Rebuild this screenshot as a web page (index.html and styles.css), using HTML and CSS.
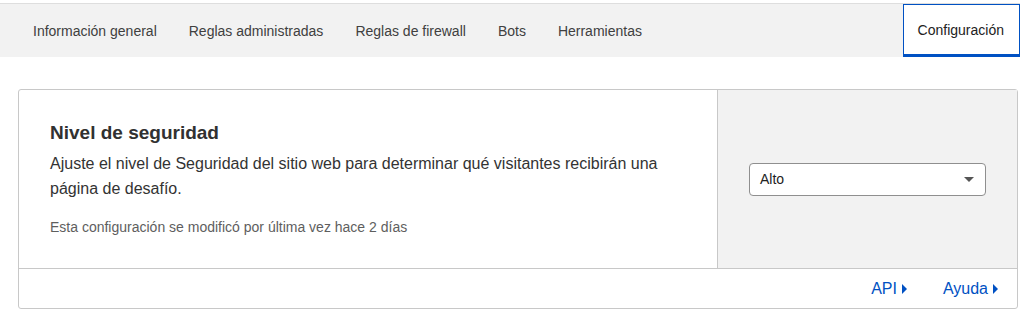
FILE: index.html
```html
<!DOCTYPE html>
<html lang="es">
<head>
    <meta charset="UTF-8">
    <meta name="viewport" content="width=device-width, initial-scale=1.0">
    <title>Configuración</title>
    <link rel="stylesheet" href="styles.css">
</head>
<body>
    <nav class="tabs">
        <a class="tab" href="#">Información general</a>
        <a class="tab" href="#">Reglas administradas</a>
        <a class="tab" href="#">Reglas de firewall</a>
        <a class="tab" href="#">Bots</a>
        <a class="tab" href="#">Herramientas</a>
        <a class="tab active" href="#">Configuración</a>
    </nav>

    <div class="card">
        <div class="card-main">
            <div class="card-info">
                <h2>Nivel de seguridad</h2>
                <p class="desc">Ajuste el nivel de Seguridad del sitio web para determinar qué visitantes recibirán una página de desafío.</p>
                <p class="meta">Esta configuración se modificó por última vez hace 2 días</p>
            </div>
            <div class="card-control">
                <div class="select">
                    <span>Alto</span>
                    <span class="caret"></span>
                </div>
            </div>
        </div>
        <div class="card-footer">
            <a href="#" class="link">API <span class="arrow"></span></a>
            <a href="#" class="link">Ayuda <span class="arrow"></span></a>
        </div>
    </div>
</body>
</html>
```

FILE: styles.css
```css
*{
    margin: 0;
    padding: 0;
    box-sizing: border-box;
}
body{
    padding-top: 3px;
    background: #fff;
    color: #333;
    font-family: "Liberation Sans", Arial, sans-serif;
}

.tabs{
    display: flex;
    height: 54px;
    margin-right: 4px;
    padding-left: 17px;
    background-color: #f2f2f2;
    border-top: 1px solid #dedede;
}
.tab{
    display: flex;
    align-items: center;
    padding: 0 16px;
    font-size: 14px;
    color: #404040;
    text-decoration: none;
}
.tab.active{
    margin-left: auto;
    padding: 0 15px 0 14px;
    background-color: #fff;
    border: 1px solid #0051c3;
    border-bottom-width: 3px;
    color: #222;
}

.card{
    margin: 32px 6px 0 18px;
    border: 1px solid #c8c8c8;
    border-radius: 3px;
}
.card-main{
    display: flex;
    border-bottom: 1px solid #c8c8c8;
}
.card-info{
    flex: 1;
    padding: 31px 31px 32px;
}
.card-info h2{
    font-size: 19px;
    font-weight: 600;
    line-height: 24px;
    color: #313131;
}
.desc{
    margin-top: 6px;
    font-size: 16px;
    line-height: 25px;
    color: #333;
}
.meta{
    margin-top: 17px;
    font-size: 14px;
    line-height: 18px;
    color: #5e5e5e;
}
.card-control{
    width: 300px;
    display: flex;
    align-items: center;
    padding: 0 31px;
    background-color: #f2f2f2;
    border-left: 1px solid #c8c8c8;
}
.select{
    flex: 1;
    height: 33px;
    display: flex;
    align-items: center;
    justify-content: space-between;
    padding: 0 11px 0 10px;
    background-color: #fff;
    border: 1px solid #8f8f8f;
    border-radius: 4px;
    font-size: 14px;
    color: #222;
}
.caret{
    width: 0;
    height: 0;
    border-left: 5px solid transparent;
    border-right: 5px solid transparent;
    border-top: 5px solid #555;
}

.card-footer{
    height: 39px;
    display: flex;
    align-items: center;
    justify-content: flex-end;
    gap: 36px;
    padding-right: 19px;
}
.link{
    display: flex;
    align-items: center;
    gap: 5px;
    font-size: 16px;
    color: #0051c3;
    text-decoration: none;
}
.arrow{
    width: 0;
    height: 0;
    border-top: 5px solid transparent;
    border-bottom: 5px solid transparent;
    border-left: 5px solid #0051c3;
}
```
